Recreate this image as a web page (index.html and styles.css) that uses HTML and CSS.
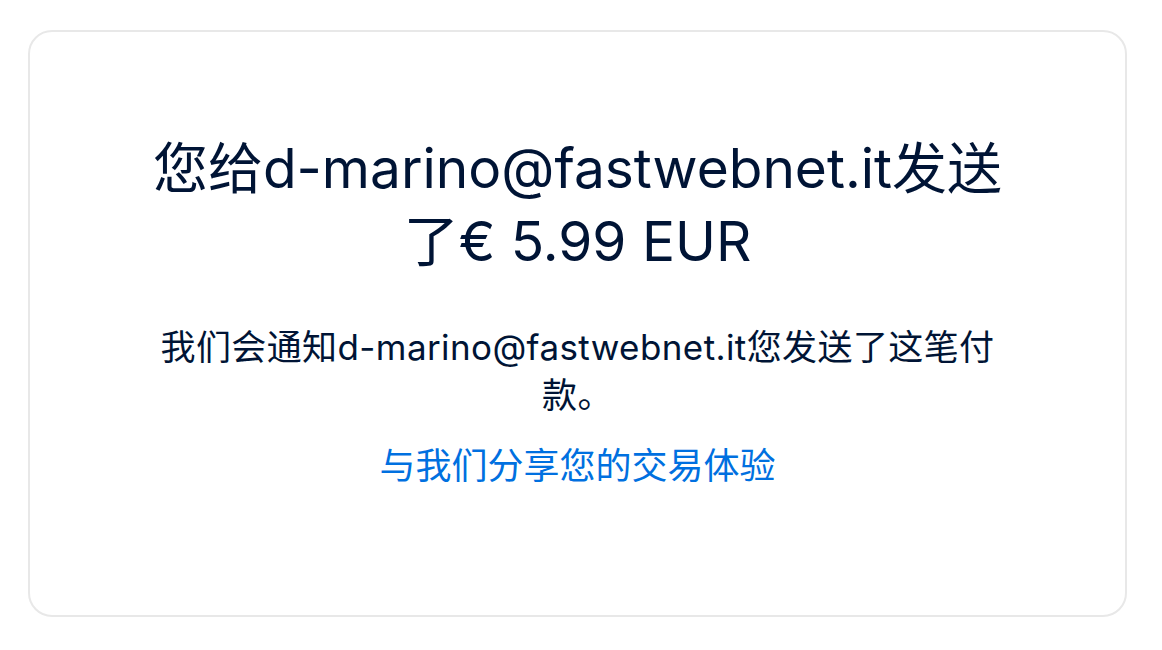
FILE: index.html
```html
<!DOCTYPE html>
<html lang="zh-CN">
<head>
<meta charset="utf-8">
<title>付款已发送</title>
<link rel="stylesheet" href="styles.css">
</head>
<body>
<main class="card">
  <div class="content">
    <h1 class="title">您给d-marino@fastwebnet.it发送了€ 5.99 EUR</h1>
    <p class="note">我们会通知d-marino@fastwebnet.it您发送了这笔付款。</p>
    <a class="feedback" href="#">与我们分享您的交易体验</a>
  </div>
</main>
</body>
</html>
```
FILE: styles.css
```css
html, body {
  margin: 0;
  padding: 0;
  background: #ffffff;
}
body {
  padding: 30px 35px 0 28px;
  font-family: Inter, "Noto Sans CJK SC", sans-serif;
  color: #001435;
}
.card {
  box-sizing: border-box;
  height: 587px;
  border: 2px solid #e8e8e8;
  border-radius: 24px;
  display: flex;
  justify-content: center;
  padding-top: 100px;
}
.content {
  width: 862px;
  display: flex;
  flex-direction: column;
  align-items: center;
  text-align: center;
}
.title {
  margin: 0;
  font-size: 55px;
  font-weight: 400;
  line-height: 73px;
}
.note {
  margin: 45px 0 0;
  font-size: 35px;
  line-height: 48px;
  letter-spacing: 0.4px;
}
.feedback {
  margin-top: 21px;
  font-size: 36px;
  line-height: 52px;
  color: #0070e0;
  text-decoration: none;
}
```
